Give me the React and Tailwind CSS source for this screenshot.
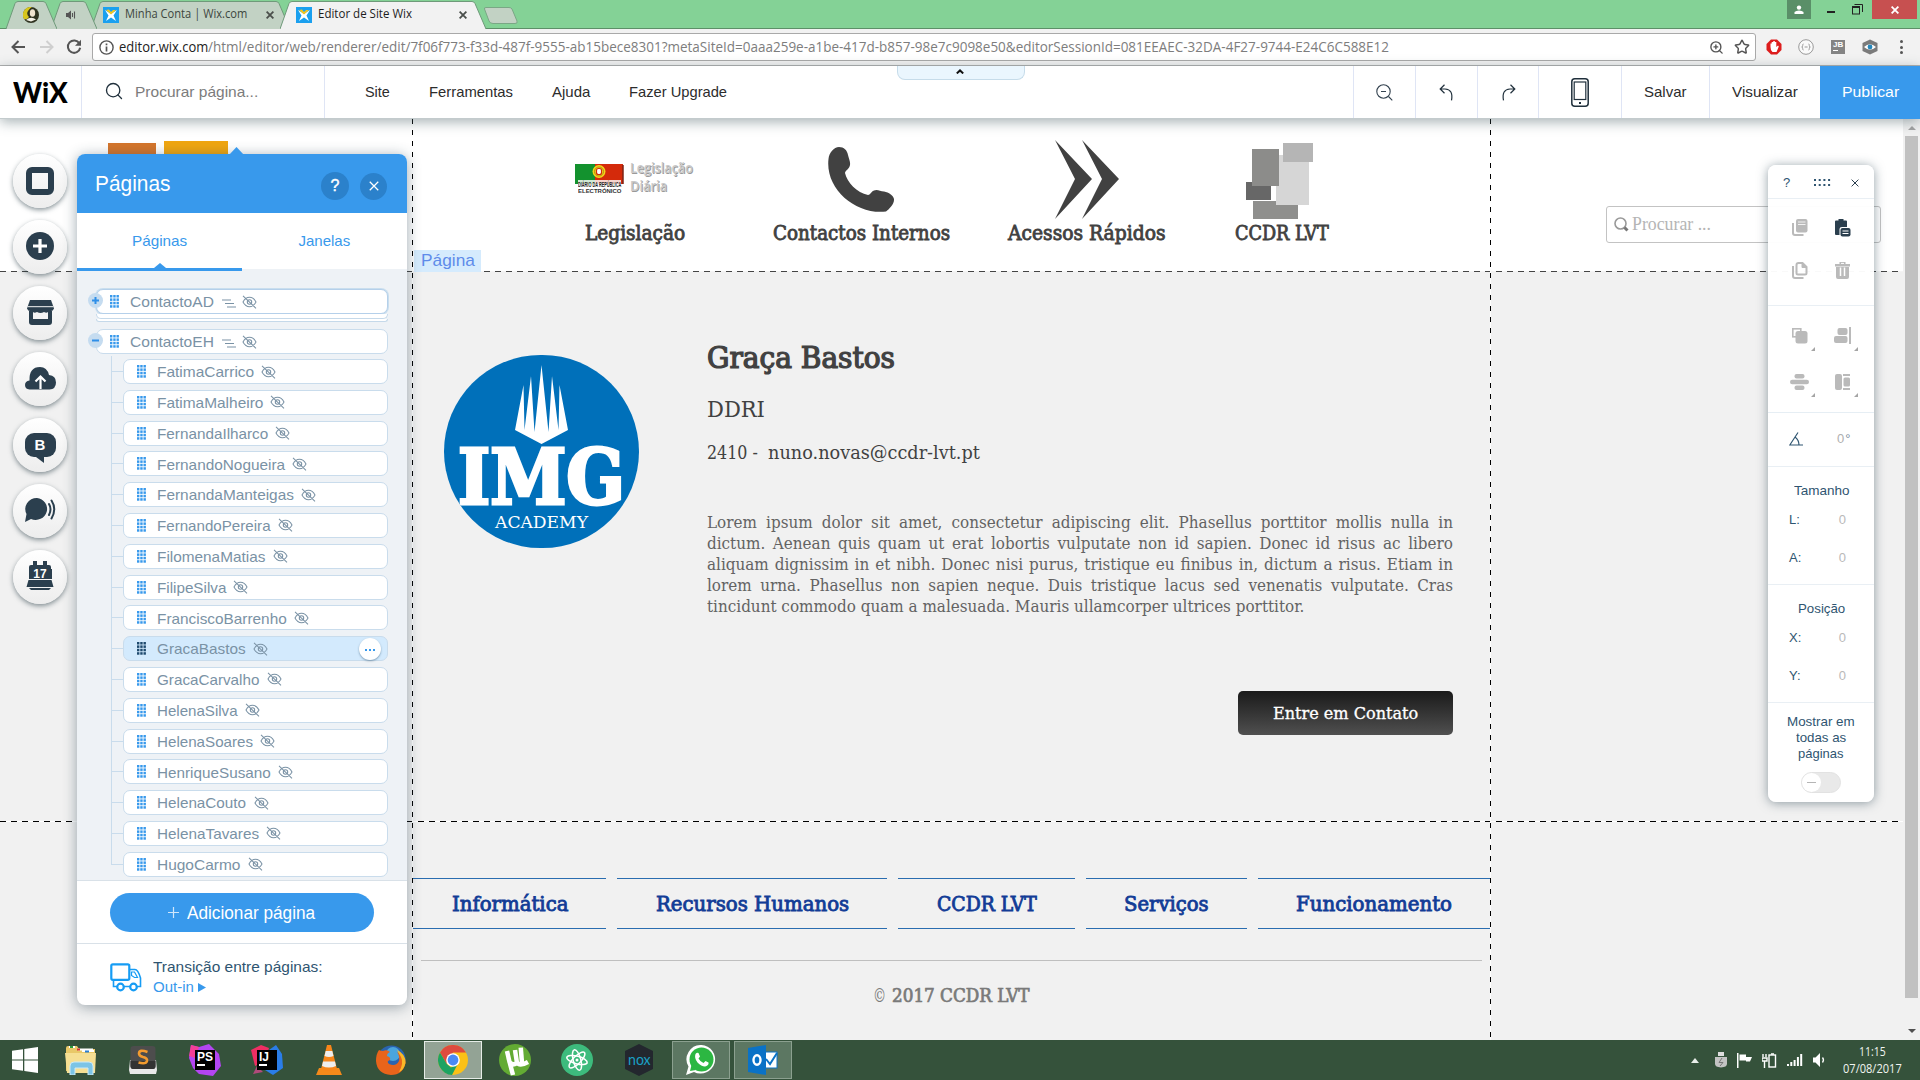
import { useLayoutEffect, useRef, useState } from "react";
import { Star, ZoomIn, Search } from "lucide-react";

/* Single line of text condensed or expanded to a given width. */
function T({ w, className = "", children }) {
  const ref = useRef(null);
  const [s, setS] = useState(1);
  useLayoutEffect(() => {
    setS(w / ref.current.offsetWidth);
  }, [w]);
  return (
    <span className={"block shrink-0 whitespace-pre text-left " + className} style={{ width: w }}>
      <span ref={ref} className="block w-max origin-left" style={{ transform: `scaleX(${s})` }}>
        {children}
      </span>
    </span>
  );
}

const SLAB = "font-['DejaVu_Serif_Condensed','DejaVu_Serif',serif]";
const UI = "font-['Open_Sans','Noto_Sans',sans-serif]";

/* ---------- browser chrome ---------- */

function TabShape({ w, fill, className = "", children }) {
  return (
    <div className={"relative h-[29px] shrink-0 " + className}>
      <svg className="absolute inset-0" width={w} height="29">
        <path
          d={`M0 29 L9 3.5 Q10 1.5 12 1.5 H${w - 14} Q${w - 12} 1.5 ${w - 11} 3.5 L${w} 29`}
          fill={fill}
          stroke="#6f9a7a"
          strokeWidth="1"
        />
      </svg>
      <div className="relative flex h-full items-center">{children}</div>
    </div>
  );
}

function Favicon() {
  return (
    <svg width="16" height="16" viewBox="0 0 16 16" className="shrink-0">
      <rect width="16" height="16" fill="#1ba0ef" />
      <path d="M2 3 L8 7 L14 3 L10.5 8.5 L13 14 L8 10.5 L3 14 L5.5 8.5Z" fill="#fff" />
      <path d="M3 3 L8 7.5 L13 3 L10 3 L8 5 L6 2.5Z" fill="#f7c61c" />
    </svg>
  );
}

function CloseX({ size = 8, color = "#4a4f4b", sw = 1.8 }) {
  return (
    <svg width={size} height={size} viewBox="0 0 8 8" className="shrink-0">
      <path d="M.6 .6 L7.4 7.4 M7.4 .6 L.6 7.4" stroke={color} strokeWidth={sw} />
    </svg>
  );
}

function TabStrip() {
  return (
    <div className={"flex h-[29px] shrink-0 border-b border-[#5d9068] bg-[#84d296] text-[12.5px] " + UI}>
      <TabShape w={51} fill="#c2d2c4" className="z-[3] ml-[6px] w-[51px]">
        <svg className="ml-[17px]" width="16" height="16" viewBox="0 0 16 16">
          <circle cx="8" cy="8" r="8" fill="#2f3320" />
          <path d="M9 0 A8 8 0 0 0 1 12 Q4 13 6 10 Q3 7 5 4 Q7 1 9 0Z" fill="#d8c61e" />
          <ellipse cx="9.5" cy="6" rx="2.7" ry="3.8" fill="#efe4cf" />
          <path d="M3 13 Q8 9 13 12.500 L8 14.500Z" fill="#f3f1e6" />
        </svg>
      </TabShape>
      <TabShape w={46} fill="#c2d2c4" className="z-[2] -ml-[6px] w-[46px]">
        <svg className="ml-[15px]" width="10" height="10" viewBox="0 0 10 10">
          <path d="M0 3 H2 L5 .5 V9.5 L2 7 H0Z" fill="#555" />
          <path d="M6.5 3 V7 M8.5 1.5 V8.5" stroke="#555" strokeWidth="1.1" />
        </svg>
      </TabShape>
      <TabShape w={199} fill="#c2d2c4" className="z-[1] -ml-[6px] w-[199px]">
        <div className="flex items-center pl-[12px]">
          <Favicon />
          <T w={122} className="ml-[6px] text-[#3c463e]">Minha Conta | Wix.com</T>
          <div className="ml-[19px]"><CloseX /></div>
        </div>
      </TabShape>
      <TabShape w={206} fill="#f2f2f2" className="z-[4] -ml-[10px] w-[206px]">
        <div className="flex items-center pl-[16px]">
          <Favicon />
          <T w={94} className="ml-[6px] text-[#1d1d1d]">Editor de Site Wix</T>
          <div className="ml-[47px]"><CloseX /></div>
        </div>
      </TabShape>
      <svg className="-ml-[3px] mt-[6px]" width="38" height="19">
        <path d="M1.5 3 Q1 1.5 3 1.5 H26 Q28 1.5 29 3 L34 15 Q35 17.5 32 17.5 H10 Q7 17.5 6 15Z" fill="#c2d2c4" stroke="#7aa785" />
      </svg>
      <div className="ml-auto flex h-[19px] items-center">
        <div className="flex h-[19px] w-[24px] items-center justify-center bg-[#5a8f68]">
          <svg width="10" height="10" viewBox="0 0 10 10" fill="#fff">
            <circle cx="5" cy="2.6" r="2.2" />
            <path d="M.5 9 V7 Q2 5.5 5 5.5 Q8 5.5 9.5 7 V9Z" />
          </svg>
        </div>
        <div className="ml-[16px] mt-[5px] h-[2px] w-[8px] bg-[#222]" />
        <svg className="ml-[17px]" width="11" height="11" viewBox="0 0 11 11" fill="none" stroke="#222">
          <rect x=".5" y="2.5" width="7" height="7.5" />
          <path d="M.5 3.5 H7.5 M2.5 .5 H10.5 V8" />
        </svg>
        <div className="ml-[9px] mr-[3px] flex h-[19px] w-[45px] items-center justify-center bg-[#c75050]">
          <CloseX color="#fff" />
        </div>
      </div>
    </div>
  );
}

function AddressBar() {
  return (
    <div className="flex h-[37px] shrink-0 items-center border-b border-[#b0b0b0] bg-[#f2f2f2]">
      <svg className="ml-[11px]" width="14" height="14" viewBox="0 0 14 14" fill="none" stroke="#555" strokeWidth="2">
        <path d="M14 7 H1.5 M7.5 1 L1.5 7 L7.5 13" />
      </svg>
      <svg className="ml-[15px]" width="14" height="14" viewBox="0 0 14 14" fill="none" stroke="#cfcfcf" strokeWidth="2">
        <path d="M0 7 H12.5 M6.5 1 L12.5 7 L6.5 13" />
      </svg>
      <svg className="ml-[12px]" width="16" height="16" viewBox="0 0 16 16">
        <path d="M13.4 4.4 A6.2 6.2 0 1 0 14.2 8.8" fill="none" stroke="#555" strokeWidth="2" />
        <path d="M15 .8 V6.8 H9Z" fill="#555" />
      </svg>
      <div className={"ml-[10px] flex h-[28px] w-[1664px] items-center rounded-[3px] border border-[#a9a9a9] bg-white text-[14px] " + UI}>
        <svg className="ml-[6px]" width="15" height="15" viewBox="0 0 15 15" fill="none" stroke="#555" strokeWidth="1.4">
          <circle cx="7.5" cy="7.5" r="6.6" />
          <path d="M7.5 6.5 V11.5 M7.5 3.6 V5.2" strokeWidth="1.7" />
        </svg>
        <T w={89} className="ml-[5px] -mt-[1px] text-[#222]">editor.wix.com</T>
        <T w={1181} className="-mt-[1px] text-[#7d7d7d]">
          /html/editor/web/renderer/edit/7f06f773-f33d-487f-9555-ab15bece8301?metaSiteId=0aaa259e-a1be-417d-b857-98e7c9098e50&amp;editorSessionId=081EEAEC-32DA-4F27-9744-E24C6C588E12
        </T>
        <ZoomIn className="ml-auto" size={15} color="#555" strokeWidth={2.2} />
        <Star className="ml-[10px] mr-[5px]" size={16} color="#555" strokeWidth={2.2} />
      </div>
      <svg className="ml-[10px]" width="16" height="16" viewBox="0 0 16 16">
        <path d="M5 .5 H11 L15.5 5 V11 L11 15.5 H5 L.5 11 V5Z" fill="#dd1d1d" />
        <path d="M4.500 8 V4.500 H5.700 V3 H7.300 V2 H8.800 V3 H10.300 V8 L12 6.500 L12.800 7.500 L10.500 13 H6.500 Q4.500 11.500 4.500 8Z" fill="#fff" />
      </svg>
      <svg className="ml-[16px]" width="16" height="16" viewBox="0 0 16 16" fill="none" stroke="#999">
        <circle cx="8" cy="8" r="7.3" fill="#fafafa" />
        <path d="M5.5 5 Q4.5 5 4.7 6.5 Q4.7 8 3.7 8 Q4.7 8 4.7 9.5 Q4.5 11 5.5 11 M10.5 5 Q11.5 5 11.3 6.5 Q11.3 8 12.3 8 Q11.3 8 11.3 9.5 Q11.5 11 10.5 11 M6.6 8 H9.6" />
      </svg>
      <div className="ml-[17px] flex h-[14px] w-[14px] flex-col bg-[#848484] pl-[2px] text-[8px] font-bold leading-[9px] text-white font-['Liberation_Sans',sans-serif]">
        JB
        <span className="mt-[1px] h-[1px] w-[5px] bg-white" />
      </div>
      <svg className="ml-[17px]" width="16" height="16" viewBox="0 0 16 16">
        <path d="M8 .5 L15.5 4 V12 L8 15.5 L.5 12 V4Z" fill="#7b7b7b" />
        <path d="M2 8 Q8 2.5 14 8 Q8 13.5 2 8Z" fill="#fff" />
        <circle cx="8" cy="8" r="2.4" fill="#2586ba" />
      </svg>
      <div className="ml-[22px] flex flex-col gap-[2.5px]">
        <span className="h-[3px] w-[3px] rounded-full bg-[#555]" />
        <span className="h-[3px] w-[3px] rounded-full bg-[#555]" />
        <span className="h-[3px] w-[3px] rounded-full bg-[#555]" />
      </div>
    </div>
  );
}

/* ---------- editor top bar ---------- */

function TopBar() {
  return (
    <div className="relative z-20 flex h-[53px] shrink-0 items-center border-b border-[#c3cbcd] bg-white text-[15px] text-[#2c2c2c] shadow-[0_3px_12px_rgba(60,85,90,0.45)]">
      <div className="flex h-full w-[82px] items-center border-r border-[#dfe5f5] pl-[13px]">
        <T w={55} className="text-[29px] leading-[30px] font-black text-black font-['Lato',sans-serif]">WiX</T>
      </div>
      <div className="flex h-full w-[243px] items-center border-r border-[#dfe5f5] pl-[22px]">
        <Search size={20} strokeWidth={1.6} color="#20303c" className="-mt-[2px]" />
        <T w={123} className="ml-[11px] pt-[1px] text-[#7c7c7c]">Procurar página...</T>
      </div>
      <T w={25} className="ml-[40px] pt-[1px]">Site</T>
      <T w={84} className="ml-[39px] pt-[1px]">Ferramentas</T>
      <T w={38} className="ml-[39px] pt-[1px]">Ajuda</T>
      <T w={98} className="ml-[39px] pt-[1px]">Fazer Upgrade</T>
      <div className="ml-[170px] flex h-[14px] w-[128px] items-center justify-center self-start rounded-b-[8px] border border-t-0 border-[#c6dcea] bg-[#eaf6fe]">
        <svg width="8" height="5" viewBox="0 0 8 5" fill="none" stroke="#111" strokeWidth="2" className="mb-[3px] mr-[2px]">
          <path d="M.8 4.4 L4 1.4 L7.2 4.4" />
        </svg>
      </div>
      <div className="ml-auto flex h-full w-[63px] items-center justify-center border-x border-[#dfe5f5]">
        <svg width="17" height="17" viewBox="0 0 17 17" fill="none" stroke="#33424f" strokeWidth="1.1">
          <circle cx="7.5" cy="7.5" r="6.7" />
          <path d="M5 7.5 H10 M12.5 12.5 L16.3 16.3" />
        </svg>
      </div>
      <div className="flex h-full w-[62px] items-center justify-center border-r border-[#dfe5f5]">
        <svg width="16" height="17" viewBox="0 0 16 17" fill="none" stroke="#20303c" strokeWidth="1.2">
          <path d="M5.5 .8 L1.2 5 L5.5 9.2 M1.2 5 H6 Q14.5 5.5 12.5 16.3" />
        </svg>
      </div>
      <div className="flex h-full w-[61px] items-center justify-center border-r border-[#dfe5f5]">
        <svg width="16" height="17" viewBox="0 0 16 17" fill="none" stroke="#20303c" strokeWidth="1.2">
          <path d="M10.5 .8 L14.8 5 L10.5 9.2 M14.8 5 H10 Q1.5 5.5 3.5 16.3" />
        </svg>
      </div>
      <div className="flex h-full w-[83px] items-center justify-center border-r border-[#dfe5f5]">
        <svg width="18" height="29" viewBox="0 0 18 29" fill="none" stroke="#20303c" strokeWidth="1.5">
          <rect x=".8" y=".8" width="16.4" height="27.4" rx="3" />
          <rect x="3.2" y="4" width="11.6" height="17.5" strokeWidth="1.2" />
          <path d="M8 25 H10" strokeWidth="2" />
        </svg>
      </div>
      <div className="flex h-full w-[88px] items-center justify-center border-r border-[#dfe5f5]"><T w={43} className="pt-[1px]">Salvar</T></div>
      <div className="flex h-full w-[110px] items-center justify-center"><T w={66} className="pt-[1px]">Visualizar</T></div>
      <div className="flex h-[53px] w-[100px] items-center justify-center bg-[#3899ec] text-white"><T w={57} className="pt-[1px]">Publicar</T></div>
    </div>
  );
}

/* ---------- left rail ---------- */

const INK = "#2b3f4e";

const railIcons = [
  <svg key="bg" width="28" height="28"><rect x="3" y="3" width="22" height="22" rx="3" fill="none" stroke={INK} strokeWidth="6" /></svg>,
  <svg key="add" className="-mt-[2px]" width="28" height="28"><circle cx="14" cy="14" r="14" fill={INK} /><path d="M14 7 V21 M7 14 H21" stroke="#fff" strokeWidth="3.2" /></svg>,
  <svg key="store" className="-mt-[2px]" width="27" height="25" viewBox="0 0 27 25">
    <path d="M3 0 H24 L27 8.5 Q26 11 24 11 H3 Q1 11 0 8.5Z" fill={INK} />
    <path d="M.5 6.7 H26.5" stroke="#f5f5f5" strokeWidth="1" />
    <path d="M2 11 H25 V22 Q25 25 22 25 H5 Q2 25 2 22Z" fill={INK} />
    <path d="M6 12 Q7.5 13.5 10 12 Q13.5 14 17 12 Q19.5 13.5 21 12 V19 H6Z" fill="#f3f3f3" />
  </svg>,
  <svg key="cloud" className="-mt-[2px]" width="31" height="23" viewBox="0 0 31 23">
    <path d="M4.5 22.5 Q0 22 0 18 Q0 14 4.5 13.5 Q4 0 15 0 Q22 0 24 8 Q31 8.5 31 15.5 Q31 22 24.5 22.5Z" fill={INK} />
    <path d="M15.5 22 V10 M10.5 14.5 L15.5 9.5 L20.5 14.5" fill="none" stroke="#fff" strokeWidth="2.2" />
  </svg>,
  <div key="blog" className="flex flex-col items-center pt-[5px]">
    <div className="flex h-[24px] w-[31px] items-center justify-center rounded-[9px] bg-[#2b3f4e] pt-[1px] text-[15px] font-bold text-white">B</div>
    <svg width="10" height="6"><path d="M1 0 H9 V6Z" fill={INK} /></svg>
  </div>,
  <svg key="chat" className="-mt-[3px]" width="33" height="26" viewBox="0 0 33 26">
    <path d="M13 1 A11.5 11 0 1 1 7 22 L1 25 L2.5 17 A11.5 11 0 0 1 13 1Z" fill={INK} />
    <path d="M25 7 Q28 12 25 18 M27.5 3.5 Q33 12 27.5 21.5" fill="none" stroke={INK} strokeWidth="2" strokeLinecap="round" />
  </svg>,
  <div key="cal" className="-mt-[3px] flex flex-col items-center">
    <svg width="28" height="8" viewBox="0 0 28 8"><path d="M3 8 V6 Q3 4 5 4 H23 Q25 4 25 6 V8Z M7 0 h4 v6 h-4z M17 0 h4 v6 h-4z" fill={INK} /></svg>
    <div className="flex h-[10px] w-[23px] items-center justify-center bg-[#2b3f4e] text-[12px] leading-[10px] font-bold text-white">17</div>
    <svg width="28" height="11" viewBox="0 0 28 11"><path d="M2.500 1 H25.500 L27.500 8 H.500Z M3 9 H25 L23 11 H5Z" fill={INK} /></svg>
  </div>,
];

function Rail() {
  return (
    <div className="absolute left-[13px] top-[35px] flex flex-col gap-[12px]">
      {railIcons.map((icon, i) => (
        <div key={i} className="flex h-[54px] w-[54px] items-center justify-center rounded-full bg-linear-to-b from-white to-[#ededed] shadow-[0_2px_5px_rgba(40,60,70,0.55)]">
          {icon}
        </div>
      ))}
    </div>
  );
}

/* ---------- pages panel ---------- */

const pages = [
  ["FatimaCarrico", 97], ["FatimaMalheiro", 106], ["FernandaIlharco", 111], ["FernandoNogueira", 128],
  ["FernandaManteigas", 136.5], ["FernandoPereira", 114], ["FilomenaMatias", 108.5], ["FilipeSilva", 69],
  ["FranciscoBarrenho", 130], ["GracaBastos", 89], ["GracaCarvalho", 102.5], ["HelenaSilva", 80.5],
  ["HelenaSoares", 96], ["HenriqueSusano", 114], ["HelenaCouto", 89.5], ["HelenaTavares", 102], ["HugoCarmo", 83.5],
];

function Grip({ color = "#3899ec" }) {
  return (
    <svg width="9" height="13" viewBox="0 0 9 13" fill={color} className="shrink-0">
      {[0, 3.4, 6.8, 10.2].map((y) => [0, 3.25, 6.5].map((x) => <rect key={x + "-" + y} x={x} y={y} width="2.4" height="2.5" />))}
    </svg>
  );
}

function HiddenEye() {
  return (
    <svg width="15" height="14" viewBox="0 0 15 14" fill="none" stroke="#7a92a5" strokeWidth="1.05" className="shrink-0">
      <path d="M1 7 Q3.5 2.3 7.5 2.3 Q11.5 2.3 14 7 Q11.5 11.7 7.5 11.7 Q3.5 11.7 1 7Z M1 .8 L14 13.3" />
      <circle cx="7.5" cy="7" r="2.2" />
    </svg>
  );
}

function SubBars() {
  return (
    <svg width="14" height="9" viewBox="0 0 14 9" stroke="#7a92a5" strokeWidth="1.2" className="shrink-0">
      <path d="M0 1 H9 M3 4.5 H12 M5 8 H14" />
    </svg>
  );
}

function ParentRow({ name, sign, w, className = "" }) {
  return (
    <div className={"flex h-[25px] items-center rounded-[7px] bg-white " + className}>
      <span className="-ml-[9px] mb-[3px] flex h-[15px] w-[15px] shrink-0 items-center justify-center rounded-full bg-[#c5dcf0]">
        <svg width="7" height="7" stroke="#2f8fe8" strokeWidth="2"><path d={sign === "+" ? "M0 3.5 H7 M3.5 0 V7" : "M0 3.5 H7"} /></svg>
      </span>
      <div className="ml-[7px]"><Grip /></div>
      <T w={w} className="ml-[11px] pt-[2px]">{name}</T>
      <div className="ml-[8px] pt-[4px]"><SubBars /></div>
      <div className="ml-[6px]"><HiddenEye /></div>
    </div>
  );
}

function PagesPanel() {
  return (
    <div className="absolute left-[77px] top-[35px] flex h-[851px] w-[330px] flex-col rounded-[8px] bg-white shadow-[0_2px_14px_rgba(40,65,80,0.45)]">
      <svg className="absolute left-[152px] -top-[7px]" width="15" height="8"><path d="M0 8 L7.5 0 L15 8Z" fill="#3899ec" /></svg>
      <div className="flex h-[59px] shrink-0 items-center rounded-t-[8px] bg-[#3899ec] pl-[18px] text-white">
        <T w={76} className="text-[22px]">Páginas</T>
        <div className="ml-[150px] mt-[5px] flex h-[28px] w-[28px] items-center justify-center rounded-full bg-[#2b81cb] text-[16px]">
          <span className="[-webkit-text-stroke:0.4px_white]">?</span>
        </div>
        <div className="ml-[11px] mt-[5px] flex h-[27px] w-[27px] items-center justify-center rounded-full bg-[#2b81cb]">
          <CloseX size={10} color="#fff" sw={1} />
        </div>
      </div>
      <div className="flex h-[58px] shrink-0 bg-[#eef2f6] text-[15px] text-[#3899ec]">
        <div className="flex w-[165px] flex-col items-center border-b-[3px] border-[#3899ec] bg-white">
          <T w={55} className="mt-[16px] leading-[24px]">Páginas</T>
          <svg className="mt-auto" width="12" height="5"><path d="M0 5 L6 0 L12 5Z" fill="#3899ec" /></svg>
        </div>
        <div className="flex h-[56px] w-[165px] justify-center bg-white">
          <T w={52} className="mt-[16px] leading-[24px]">Janelas</T>
        </div>
      </div>
      <div className="h-[609px] shrink-0 overflow-hidden bg-[#eef2f6] pr-[19px] pt-[18px] text-[15px] text-[#7a92a5]">
        <div className="ml-[19px]">
          <ParentRow name="ContactoAD" sign="+" w={84} className="border border-[#b5d0ea] ring-1 ring-[#c9deee]" />
          <div className="h-[5px] rounded-b-[6px] border border-t-0 border-[#c5d9ea] bg-white" />
          <div className="h-[3px] rounded-b-[6px] border border-t-0 border-[#c5d9ea] bg-white" />
          <ParentRow name="ContactoEH" sign="-" w={84} className="mt-[7px] border border-[#c9dcec]" />
        </div>
        <div className="relative ml-[34px] mt-[5px] flex flex-col gap-[5.8px]">
          <div className="absolute left-0 -top-[3px] bottom-[12px] w-px bg-[#c9dcec]" />
          {pages.map(([name, w]) => {
            const on = name === "GracaBastos";
            return (
              <div key={name} className="flex h-[25px] shrink-0 items-center">
                <div className="h-px w-[12px] bg-[#c9dcec]" />
                <div className={"flex h-[25px] w-[265px] items-center rounded-[7px] border border-[#c9dcec] pl-[13px] " + (on ? "bg-[#d3eafd]" : "bg-white")}>
                  <Grip color={on ? "#1f4a6e" : "#3899ec"} />
                  <T w={w} className="ml-[11px] pt-[2px]">{name}</T>
                  <div className="ml-[7px]"><HiddenEye /></div>
                  {on && (
                    <div className="ml-auto mr-[6px] flex h-[22px] w-[22px] items-center justify-center gap-[2px] rounded-full bg-white pt-[2px] shadow-[0_1px_2px_rgba(40,80,110,0.5)]">
                      <i className="h-[2px] w-[2px] bg-[#3899ec]" />
                      <i className="h-[2px] w-[2px] bg-[#3899ec]" />
                      <i className="h-[2px] w-[2px] bg-[#3899ec]" />
                    </div>
                  )}
                </div>
              </div>
            );
          })}
        </div>
      </div>
      <div className="flex h-[64px] shrink-0 justify-center border-y border-[#d9e1e8] pt-[12px]">
        <div className="flex h-[39px] w-[264px] items-center rounded-full bg-[#3899ec] pl-[58px] text-white">
          <svg width="11" height="11" stroke="#cfe6fb" strokeWidth="1.2"><path d="M0 5.5 H11 M5.5 0 V11" /></svg>
          <T w={128} className="ml-[8px] pt-[1px] text-[18px]">Adicionar página</T>
        </div>
      </div>
      <div className="flex pl-[33px] pt-[13px]">
        <svg className="mt-[6px]" width="32" height="29" viewBox="0 0 32 29" fill="none" stroke="#169cf4" strokeWidth="2.2">
          <rect x="1.3" y="1.3" width="18" height="15.5" rx="1.5" />
          <path d="M20 6.5 H25 Q28 6.5 30.5 15 V23.5 H3.5 V17" strokeWidth="1.6" />
          <path d="M21.5 9 H24.5 L27.5 14.5 H24.5 L21.5 12.5Z" strokeWidth="1.2" />
          <circle cx="10.5" cy="24" r="3.3" fill="#fff" />
          <circle cx="23.5" cy="24" r="3.3" fill="#fff" />
        </svg>
        <div className="ml-[11px] text-[15px] leading-[20px]">
          <T w={170} className="text-[#2f5571]">Transição entre páginas:</T>
          <div className="flex items-center text-[#3899ec]">
            <T w={41}>Out-in</T>
            <svg className="ml-[4px]" width="8" height="9"><path d="M0 0 L8 4.5 L0 9Z" fill="#3899ec" /></svg>
          </div>
        </div>
      </div>
    </div>
  );
}

/* ---------- site being edited ---------- */

function NavItem({ w, label, top, className, children }) {
  return (
    <div className={"flex flex-col items-center " + className}>
      <div className={"flex h-[102px] items-start " + top}>{children}</div>
      <T w={w} className={"text-[20px] leading-[24px] text-[#414141] [-webkit-text-stroke:0.8px_#414141] " + SLAB}>{label}</T>
    </div>
  );
}

function SiteHeader() {
  return (
    <div className="flex h-[153px] shrink-0 bg-white">
      <NavItem w={100} label="Legislação" className="ml-[575px] w-[119px]" top="pt-[44px]">
        <div className="-ml-[2px] mt-[1px] flex w-[49px] flex-col items-center">
          <svg width="49" height="20" viewBox="0 0 49 20">
            <rect width="20" height="20" fill="#13922e" />
            <rect x="20" width="28" height="20" fill="#d42a0b" />
            <path d="M48 1 V20" stroke="#7d2316" strokeWidth="1.5" />
            <circle cx="24" cy="7.5" r="6.5" fill="#f2d51a" />
            <circle cx="24" cy="7.5" r="4.5" fill="none" stroke="#b58d10" />
            <rect x="21.5" y="4.5" width="5" height="6" rx="2" fill="#fff" stroke="#d42a0b" strokeWidth="1.2" />
          </svg>
          <T w={43} className="-mt-[4px] bg-white/80 text-[8px] leading-[9px] font-bold text-[#222]">DIÁRIO DA REPÚBLICA</T>
          <T w={43} className="text-[5px] leading-[5px] font-bold text-[#333]">ELECTRÓNICO</T>
        </div>
        <div className="ml-[6px] -mt-[4px] text-[15px] leading-[17.5px] font-semibold text-[#c9c9c9] [text-shadow:1px_1px_0_#9a9a9a] font-['Open_Sans',sans-serif]">
          <T w={63}>Legislação</T>
          <T w={37}>Diária</T>
        </div>
      </NavItem>
      <NavItem w={177} label="Contactos Internos" className="ml-[79px] w-[177px]" top="pt-[28px]">
        <svg width="67" height="66" viewBox="0 0 67 66">
          <path d="M.5 12 C1 6 6 0 11 0 C16 0 19 3 20 8 C21 12 22.5 15 22 18 C21.5 22 17.5 23 17 26 C19 35 29 46 40 48 C43 47.5 43 44.5 46 43.5 C49 42 52 44 56 44.5 C61 45.5 65 48 66 52 C66.5 57 61 62 58 64.5 C28 68 -3 42 .5 12Z" fill="#414141" />
        </svg>
      </NavItem>
      <NavItem w={158} label="Acessos Rápidos" className="ml-[58px] w-[157px]" top="pt-[21px]">
        <svg width="65" height="79" viewBox="0 0 65 79" fill="#414141" className="ml-[2px]">
          <path d="M0 0 L37 39 L0 79 L20 39Z M27 0 L64 39 L27 79 L47 39Z" />
        </svg>
      </NavItem>
      <NavItem w={94} label="CCDR LVT" className="ml-[70px] w-[93px]" top="pt-[24px]">
        <svg width="67" height="76" viewBox="0 0 67 76" className="mr-[4px]">
          <rect x="7" y="58" width="45" height="18" fill="#8f8f8d" />
          <rect x="30" y="12" width="33" height="50" fill="#d6d6d6" />
          <rect x="0" y="39" width="25" height="18" fill="#676767" />
          <rect x="6" y="6" width="27" height="37" fill="#8c8c8a" />
          <rect x="37" y="0" width="30" height="19" fill="#b5b5b5" />
        </svg>
      </NavItem>
      <div className="ml-[278px] mt-[87px] flex h-[37px] w-[275px] items-center rounded-[3px] border border-[#c3c3c3] pl-[7px]">
        <svg width="15" height="15" viewBox="0 0 15 15" fill="none">
          <circle cx="6.5" cy="6.5" r="5.5" stroke="#999" strokeWidth="1.6" />
          <path d="M10.5 10.5 L13.5 13.5" stroke="#777" strokeWidth="3" />
        </svg>
        <T w={79} className="ml-[3px] text-[18px] text-[#b5b5b5] font-['Liberation_Serif',serif]">Procurar ...</T>
      </div>
    </div>
  );
}

const lorem = [
  "Lorem ipsum dolor sit amet, consectetur adipiscing elit. Phasellus porttitor mollis nulla in",
  "dictum. Aenean quis quam ut erat lobortis vulputate non id sapien. Donec id risus ac libero",
  "aliquam dignissim in et nibh. Donec nisi purus, tristique eu finibus in, dictum a risus. Etiam in",
  "lorem urna. Phasellus non sapien neque. Duis tristique lacus sed venenatis vulputate. Cras",
];

/* Justified paragraph; the last line sets the horizontal scale of all of them. */
function Lorem() {
  const ref = useRef(null);
  const [s, setS] = useState(1);
  useLayoutEffect(() => {
    setS(597 / ref.current.offsetWidth);
  }, []);
  return (
    <div className={"mt-[48px] h-[105px] w-[746px] text-[16.5px] leading-[21px] text-[#636363] " + SLAB}>
      <div className="origin-top-left" style={{ width: 746 / s, transform: `scaleX(${s})` }}>
        {lorem.map((l) => (
          <div key={l} className="h-[21px] text-justify [text-align-last:justify]">{l}</div>
        ))}
        <span ref={ref} className="block w-max">tincidunt commodo quam a malesuada. Mauris ullamcorper ultrices porttitor.</span>
      </div>
    </div>
  );
}

function AcademyLogo() {
  return (
    <div className="mt-[83px] flex h-[193px] w-[195px] flex-col items-center overflow-hidden rounded-full bg-[#0070ba] text-white">
      <svg className="mt-[10px] shrink-0" width="53" height="79" viewBox="0 0 53 79" fill="#fff">
        <path d="M0 65 L8.5 20 L9.5 65 L16 11 L19.5 67 L26.5 0 L33.5 67 L37 11 L43.5 65 L44.5 20 L53 65 L26.5 79Z" />
      </svg>
      <T w={167} className={"mt-[4px] text-[76px] leading-[60px] font-bold [-webkit-text-stroke:3px_white] " + SLAB}>IMG</T>
      <T w={93} className={"mt-[3px] text-[17px] leading-[22px] " + SLAB}>ACADEMY</T>
    </div>
  );
}

function SiteBody() {
  return (
    <div className="flex h-[549px] shrink-0 pl-[444px]">
      <AcademyLogo />
      <div className={"ml-[68px] flex w-[746px] flex-col pt-[68px] text-[#414141] " + SLAB}>
        <T w={188} className="text-[29px] leading-[36px] [-webkit-text-stroke:1.2px_#414141]">Graça Bastos</T>
        <T w={58} className="mt-[19px] text-[23px] leading-[28px]">DDRI</T>
        <div className="mt-[19px] flex text-[18px] leading-[22px]">
          <T w={51}>2410 -</T>
          <T w={212} className="ml-[10px]">nuno.novas@ccdr-lvt.pt</T>
        </div>
        <Lorem />
        <div className="mt-[74px] flex h-[44px] w-[215px] items-center justify-center self-end rounded-[5px] bg-linear-to-b from-[#1b1b1b] to-[#505050] text-white">
          <T w={145} className="pb-[1px] text-[17.5px] leading-[22px] [-webkit-text-stroke:0.3px_white]">Entre em Contato</T>
        </div>
      </div>
    </div>
  );
}

function FooterLink({ w, className, children }) {
  return (
    <div className={"flex h-[51px] items-center justify-center border-y border-[#2a6db0] " + className}>
      <T w={w} className="text-[20px] leading-[24px] [-webkit-text-stroke:0.8px_#123c96]">{children}</T>
    </div>
  );
}

function SiteFooter() {
  return (
    <div className={"flex flex-1 flex-col pl-[413px] pt-[57px] " + SLAB}>
      <div className="flex gap-[11px] text-[#123c96]">
        <FooterLink w={116} className="w-[193px]">Informática</FooterLink>
        <FooterLink w={193} className="w-[270px]">Recursos Humanos</FooterLink>
        <FooterLink w={100} className="w-[177px]">CCDR LVT</FooterLink>
        <FooterLink w={85} className="w-[161px]">Serviços</FooterLink>
        <FooterLink w={156} className="w-[232px]">Funcionamento</FooterLink>
      </div>
      <div className="ml-[8px] mt-[31px] h-px w-[1061px] bg-[#bfbfbf]" />
      <div className="mt-[23px] flex w-[1077px] justify-center text-[18px] leading-[24px] text-[#7a7a7a]">
        <T w={13}>©</T>
        <T w={138} className="ml-[6px] [-webkit-text-stroke:0.7px_#7a7a7a]">2017 CCDR LVT</T>
      </div>
    </div>
  );
}

/* ---------- floating toolbox ---------- */

function Corner() {
  return <svg className="absolute -bottom-[6px] -right-[6px]" width="4" height="4"><path d="M4 0 V4 H0Z" fill="#a5a5a5" /></svg>;
}

function ToolIcon({ corner, children }) {
  return (
    <div className="relative flex h-[19px] w-[19px] items-center justify-center">
      {children}
      {corner && <Corner />}
    </div>
  );
}

function Pair({ label, w, className = "" }) {
  return (
    <div className={"flex h-[18px] items-center justify-between pl-[21px] pr-[28px] " + className}>
      <T w={w} className="text-[#2f5571]">{label}</T>
      <span className="text-[#b9b9b9]">0</span>
    </div>
  );
}

const G = "#bababa";

function Toolbox() {
  return (
    <div className="absolute left-[1768px] top-[46px] flex h-[637px] w-[106px] flex-col rounded-[8px] bg-white/[0.97] text-[13px] text-[#2f5571] shadow-[0_1px_11px_rgba(40,65,80,0.5)]">
      <div className="flex h-[34px] items-center border-b border-[#e9eff4] pl-[15px]">
        <span className="pt-[3px]">?</span>
        <svg className="ml-[24px] mt-[2px]" width="17" height="8" fill="#2f5571">
          {[0, 4.7, 9.4, 14.1].map((x) => [0, 5].map((y) => <rect key={x + "-" + y} x={x} y={y} width="2" height="2" />))}
        </svg>
        <div className="ml-[20px] mt-[2px]"><CloseX size={8} color="#2b3f4e" sw={1} /></div>
      </div>
      <div className="grid h-[107px] grid-cols-2 content-start justify-items-center gap-y-[24px] border-b border-[#e9eff4] px-[10px] pt-[19px]">
        <ToolIcon>
          <svg width="16" height="17" viewBox="0 0 16 17">
            <rect x="4" y="0" width="11.5" height="13.5" rx="2" fill={G} />
            <path d="M6 3 H13.5 M6 5.5 H13.5" stroke="#fff" strokeWidth=".8" />
            <path d="M1 4 V14 Q1 16 3 16 H11.5" fill="none" stroke={G} strokeWidth="2" />
          </svg>
        </ToolIcon>
        <ToolIcon>
          <svg width="16" height="18" viewBox="0 0 16 18" fill={INK}>
            <path d="M1 1.5 H3.5 V0 H8.5 V1.5 H11 Q12 1.5 12 2.5 V8 H7 Q4.5 8 4.5 10 V16 H1 Q0 16 0 15 V2.5 Q0 1.5 1 1.5Z" />
            <rect x="5.5" y="9" width="10" height="8.5" rx="2" />
            <path d="M7.5 12 H13.5 M7.5 14.5 H13.5" stroke="#fff" strokeWidth="1.1" />
          </svg>
        </ToolIcon>
        <ToolIcon>
          <svg width="16" height="17" viewBox="0 0 16 17" fill="none" stroke={G} strokeWidth="2">
            <path d="M6.5 1 H10.5 L14.5 5 V11 Q14.5 12.5 13 12.5 H6 Q4.5 12.5 4.5 11 V3 Q4.5 1 6.5 1Z M1 4 V14 Q1 16 3 16 H11.5" />
            <path d="M10 1 V5.5 H14.5Z" fill={G} strokeWidth="1" />
          </svg>
        </ToolIcon>
        <ToolIcon>
          <svg width="15" height="17" viewBox="0 0 15 17">
            <path d="M0 2 H4.5 V0 H10.5 V2 H15 V4.5 H0Z M1 5 H14 V15 Q14 17 12 17 H3 Q1 17 1 15Z" fill={G} />
            <path d="M5.5 5.5 V14 M9.5 5.5 V14" stroke="#fff" strokeWidth="1.5" />
            <path d="M6 1.4 H9" stroke="#fff" />
          </svg>
        </ToolIcon>
      </div>
      <div className="grid h-[107px] grid-cols-2 content-start justify-items-center gap-y-[27px] border-b border-[#e6eef4] px-[10px] pt-[20px]">
        <ToolIcon corner>
          <svg width="16" height="16" viewBox="0 0 16 16">
            <rect x=".8" y=".8" width="8" height="8" fill="none" stroke={G} strokeWidth="1.6" />
            <rect x="3.5" y="3" width="12" height="12.5" rx="2.5" fill={G} />
          </svg>
        </ToolIcon>
        <ToolIcon corner>
          <svg width="18" height="17" viewBox="0 0 18 17" fill={G}>
            <rect x="3.5" y="1" width="10" height="7" rx="2" /><rect x="0" y="9" width="13.5" height="7" rx="2" /><rect x="15" y="0" width="2" height="17" />
          </svg>
        </ToolIcon>
        <ToolIcon corner>
          <svg width="19" height="16" viewBox="0 0 19 16" fill={G}>
            <rect x="4.5" y="0" width="10" height="4.5" rx="2" /><rect x="0" y="5.8" width="19" height="4.4" rx="2.2" /><rect x="4.5" y="11.5" width="10" height="4.5" rx="2" />
          </svg>
        </ToolIcon>
        <ToolIcon corner>
          <svg width="15" height="16" viewBox="0 0 15 16" fill={G}>
            <rect width="7" height="16" rx="2" /><rect x="8.5" y="3.5" width="6.5" height="9" rx="1.5" /><path d="M8 0 H15 V2 H8Z M8 14 H15 V16 H8Z" />
          </svg>
        </ToolIcon>
      </div>
      <div className="flex h-[54px] items-center border-b border-[#e9eff4] pb-[2px] pl-[21px]">
        <svg width="14" height="14" viewBox="0 0 14 14" fill="none" stroke="#2f5571" strokeWidth="1.2">
          <path d="M9 .5 L.8 13 H14 M6 5 Q10 8 10 13" />
        </svg>
        <span className="ml-[34px] flex text-[#b0b0b0]">0<span className="ml-[1px] text-[#7b8e9c]">°</span></span>
      </div>
      <div className="flex h-[118px] flex-col border-b border-[#e9eff4] pt-[14px]">
        <T w={55} className="self-center leading-[20px]">Tamanho</T>
        <Pair label="L:" w={11} className="mt-[10px]" />
        <Pair label="A:" w={12} className="mt-[20px]" />
      </div>
      <div className="flex h-[118px] flex-col border-b border-[#e9eff4] pt-[14px]">
        <T w={47} className="self-center leading-[20px]">Posição</T>
        <Pair label="X:" w={12} className="mt-[10px]" />
        <Pair label="Y:" w={12} className="mt-[20px]" />
      </div>
      <div className="flex flex-col items-center pt-[11px] leading-[16px]">
        <T w={68}>Mostrar em</T>
        <T w={50}>todas as</T>
        <T w={46}>páginas</T>
        <div className="mt-[10px] flex h-[21px] w-[40px] items-center rounded-full border border-[#e2e2e2] bg-[#e9e9e9]">
          <div className="flex h-[19px] w-[19px] items-center justify-center rounded-full bg-white"><i className="h-px w-[9px] bg-[#b5b5b5]" /></div>
        </div>
      </div>
    </div>
  );
}

function Canvas() {
  return (
    <div className="relative flex h-[921px] shrink-0 bg-[#f1f1f1]">
      <div className="flex w-[1903px] flex-col">
        <SiteHeader />
        <SiteBody />
        <SiteFooter />
      </div>
      <div className="flex w-[17px] flex-col items-center bg-[#f1f1f1]">
        <svg className="mt-[7px]" width="8" height="4"><path d="M0 4 L4 0 L8 4Z" fill="#a3a3a3" /></svg>
        <div className="mt-[6px] h-[862px] w-[13px] bg-[#c1c1c1]" />
        <svg className="mt-auto mb-[7px]" width="8" height="4"><path d="M0 0 L4 4 L8 0Z" fill="#505050" /></svg>
      </div>
      <div className="absolute left-0 top-[152px] h-px w-[1903px] bg-[repeating-linear-gradient(90deg,#444_0_6px,#f4f4f4_6px_11px)]" />
      <div className="absolute left-0 top-[702px] h-px w-[1903px] bg-[repeating-linear-gradient(90deg,#000_0_6px,#fff_6px_11px)]" />
      <div className="absolute left-[412px] top-0 h-[921px] w-px bg-[repeating-linear-gradient(180deg,#000_0_5px,#fff_5px_11px)]" />
      <div className="absolute left-[1490px] top-0 h-[921px] w-px bg-[repeating-linear-gradient(180deg,#000_0_5px,#fff_5px_11px)]" />
      <div className="absolute left-[414px] top-[131px] flex h-[22px] w-[67px] items-center bg-[#d5ebfd] pl-[7px] text-[17px] text-[#5e8bea]">
        <T w={54}>Página</T>
      </div>
      <div className="absolute left-[108px] top-[22px] flex items-end gap-[8px]">
        <div className="h-[20px] w-[48px] bg-[#d4752c]" />
        <div className="h-[22px] w-[64px] bg-[#f0a611]" />
      </div>
      <Rail />
      <PagesPanel />
      <Toolbox />
    </div>
  );
}

/* ---------- taskbar ---------- */

function JetIcon({ label, children }) {
  return (
    <div className="relative h-[32px] w-[32px]">
      <svg className="absolute inset-0" width="32" height="32" viewBox="0 0 32 32">{children}</svg>
      <div className="relative ml-[6px] mt-[6px] h-[20px] w-[20px] bg-black pl-[2px] pt-[1px] text-[12px] leading-[13px] font-bold text-white">
        {label}
        <span className="block h-[1.5px] w-[8px] bg-white" />
      </div>
    </div>
  );
}

function Slot({ active, className = "", children }) {
  return <div className={"flex h-[38px] w-[58px] shrink-0 items-center justify-center " + (active ? "border " : "") + className}>{children}</div>;
}

function Taskbar() {
  return (
    <div className="flex h-[40px] shrink-0 items-center bg-[#35523b]">
      <div className="ml-[12px] w-[26px]">
        <svg width="26" height="26" viewBox="0 0 26 26" fill="#fff"><path d="M0 3.8 L11 2.2 V12.4 H0Z M12.3 2 L26 0 V12.4 H12.3Z M0 13.6 H11 V23.8 L0 22.2Z M12.3 13.6 H26 V26 L12.3 24Z" /></svg>
      </div>
      <Slot className="ml-[14px]">
        <svg width="32" height="30" viewBox="0 0 32 30">
          <path d="M1 3 Q1 1 3 1 H12 L14 4 H30 V26 H1Z" fill="#e9c868" />
          <path d="M4 2 H10 M13 4.5 H28 M17 6 H29" stroke="#fff" strokeWidth="2" />
          <path d="M5 1 h3 v2 h-3z" fill="#2c9b3c" /><path d="M12 3.5 h3 v2 h-3z" fill="#d33" /><path d="M20 5.5 h4 v2 h-4z" fill="#2b7fd0" />
          <path d="M0 8 H31 L30 28 H2Z" fill="#f6df93" />
          <path d="M5 30 V21 Q5 17 9 17 H24 Q28 17 28 21 V30 H23 V23 H10 V30Z" fill="#7cc4e6" stroke="#cdeaf6" />
        </svg>
      </Slot>
      <Slot className="ml-[4px]">
        <svg width="30" height="28" viewBox="0 0 30 28"><path d="M1 24 L2 14 H28 L29 24 L28 28 H2Z" fill="#e8e8e8" /><rect x="2.5" y="0" width="25" height="23" rx="3" fill="#4d4d4d" /><path d="M2.5 15 H27.5 V20 Q27.5 23 25 23 H5 Q2.5 23 2.5 20Z" fill="#333" /><path d="M19.5 6 Q11 3 11 7.5 Q11 10 15 11 Q19.5 12 19 15 Q18 18.500 10.5 16.5" fill="none" stroke="#f39b2f" strokeWidth="2.6" /></svg>
      </Slot>
      <Slot className="ml-[4px]">
        <JetIcon label="PS"><path d="M2 1 L10 3 L20 0 L30 10 L32 22 L24 32 L10 30 L4 24 L0 14Z" fill="#b345f1" /><path d="M2 1 L10 3 L6 14 L0 12Z" fill="#f43f97" /></JetIcon>
      </Slot>
      <Slot className="ml-[4px]">
        <JetIcon label="IJ"><path d="M0 6 L10 1 L18 4 L14 18 L4 22Z" fill="#ef2e63" /><path d="M18 6 L25 1 L31 10 L32 24 L22 31 L14 26Z" fill="#2a7de8" /><path d="M6 22 L2 30 L12 28Z" fill="#b04a7b" /></JetIcon>
      </Slot>
      <Slot className="ml-[4px]">
        <svg width="26" height="30" viewBox="0 0 26 30"><path d="M3 23 H23 L26 30 H0Z" fill="#f58a1a" /><path d="M11 0 H15 L21 24 Q13 28 5 24Z" fill="#f7861a" /><path d="M9.7 6 H16.3 L17.5 11 Q13 13 8.5 11Z M7 16.5 H19 L20 21 Q13 24 6 21Z" fill="#eee" /></svg>
      </Slot>
      <Slot className="ml-[4px]">
        <svg width="30" height="30" viewBox="0 0 30 30"><circle cx="15.5" cy="14.5" r="14" fill="#2a64b0" /><circle cx="17" cy="9" r="7" fill="#4aa5dd" /><path d="M3 5 Q5 6 7 6 Q11 4 14 7 Q11 8 11 11 Q15 12 14 15 Q10 16 13 19 Q20 22 23 16 Q24 11 21 7 Q30 11 29.5 18 Q27 30 15 30 Q1 29 0 16 Q0 9 3 5Z" fill="#e8641b" /><path d="M21 5 Q30 9 29.5 18 Q28 25 23 27 Q28 18 25 12Z" fill="#f9b928" /></svg>
      </Slot>
      <Slot active className="ml-[4px] border-[#e6ece7] bg-[#93a395]">
        <svg width="30" height="30" viewBox="0 0 30 30"><circle cx="15" cy="15" r="15" fill="#fbc116" /><path d="M2 7.5 A15 15 0 0 1 28 7.5 H15 L8.6 18.7Z" fill="#dd4b3e" /><path d="M2 7.5 L8.6 18.7 L13 22.5 L20 18.500 L14 30 A15 15 0 0 1 2 7.5Z" fill="#1da362" /><circle cx="15" cy="15" r="6.8" fill="#fff" /><circle cx="15" cy="15" r="5.4" fill="#4a8af4" /></svg>
      </Slot>
      <Slot className="ml-[4px]">
        <svg width="32" height="32" viewBox="0 0 32 32"><circle cx="16" cy="16" r="16" fill="#63ab33" /><path d="M8 7 L10.500 18 Q13 22 18 19 L16 6 M18 18 Q20 23 29 18 M9.500 14 L14 31" fill="none" stroke="#fff" strokeWidth="4.500" /><path d="M24 3 L27 19" stroke="#fff" strokeWidth="4.500" transform="rotate(6 25 11) translate(-3 1)" /></svg>
      </Slot>
      <Slot className="ml-[4px]">
        <svg width="32" height="32" viewBox="0 0 32 32"><circle cx="16" cy="16" r="16" fill="#3dbb7d" /><g fill="none" stroke="#fff" strokeWidth="1.5"><ellipse cx="16" cy="16" rx="3.8" ry="10.5" transform="rotate(-15 16 16)" /><ellipse cx="16" cy="16" rx="3.8" ry="10.5" transform="rotate(45 16 16)" /><ellipse cx="16" cy="16" rx="3.8" ry="10.5" transform="rotate(105 16 16)" /></g><circle cx="16" cy="16" r="1.5" fill="#fff" /></svg>
      </Slot>
      <Slot className="ml-[4px]">
        <div className="flex h-[32px] w-[28px] items-center justify-center bg-[#23272e] [clip-path:polygon(50%_0,100%_22%,100%_78%,50%_100%,0_78%,0_22%)]">
          <T w={23} className="pb-[3px] text-[16px] leading-[18px] text-[#1a9fc4] font-['Lato',sans-serif]">nox</T>
        </div>
      </Slot>
      <Slot active className="ml-[4px] border-[#8ba08f] bg-[#5c7762]">
        <svg width="30" height="30" viewBox="0 0 30 30"><path d="M15.5 0 A14.5 14.3 0 1 1 8 27 L0 30 L2.5 21.5 A14.5 14.3 0 0 1 15.5 0Z" fill="#fff" /><circle cx="15.5" cy="14.5" r="12" fill="#2cb742" /><path d="M4 26 L5.5 20 L10 25Z" fill="#2cb742" /><path d="M9.5 9 Q11 7 12.5 8 L14 11.5 L12.5 13.5 Q14 16.5 17.5 18 L19.5 16 L22.5 17.5 Q23 20 20 21.3 Q16 22 11.5 17.5 Q8 13 9.5 9Z" fill="#fff" /></svg>
      </Slot>
      <Slot active className="ml-[4px] border-[#8ba08f] bg-[#5c7762]">
        <svg width="30" height="30" viewBox="0 0 30 30"><rect x="15" y="7" width="14" height="16" fill="#fff" stroke="#0a72c6" /><path d="M18 14 L22 19 L29 8" fill="none" stroke="#0a72c6" strokeWidth="2" /><path d="M0 3 L18 0 V30 L0 27Z" fill="#0a72c6" /><ellipse cx="9" cy="15" rx="3.5" ry="4.8" fill="none" stroke="#fff" strokeWidth="2.4" /></svg>
      </Slot>
      <div className="ml-auto flex items-center">
        <svg width="8" height="5"><path d="M0 5 L4 0 L8 5Z" fill="#e9eeea" /></svg>
        <svg className="ml-[16px]" width="12" height="16" viewBox="0 0 12 16"><path d="M3 0 H9 V4 H3Z" fill="#ddd" /><path d="M0 5 H12 V12 Q12 15 6 15.5 Q0 15 0 12Z" fill="#c3c3c3" /><path d="M7 6 L4 10.5 H8 L5 14" fill="none" stroke="#777" /></svg>
        <svg className="ml-[10px]" width="16" height="15" viewBox="0 0 16 15" fill="#fff"><path d="M0 0 H1.5 V15 H0Z M2.5 1.5 H9 V4 H15 L13 8.5 H9 V7.5 H2.5Z" /></svg>
        <svg className="ml-[9px]" width="15" height="15" viewBox="0 0 15 15" fill="none" stroke="#fff" strokeWidth="1.4"><rect x="7" y="2" width="6.5" height="12" /><path d="M9 1 H12 M1 1 V4 M4 1 V4 M0 5 H5 V8 H0Z M2.5 8 V15" /></svg>
        <svg className="ml-[10px]" width="16" height="12" viewBox="0 0 16 12" fill="#fff"><path d="M0 10 h2 v2 h-2z M3.3 8 h2 v4 h-2z M6.6 6 h2 v6 h-2z M9.9 3 h2 v9 h-2z M13.2 0 h2 v12 h-2z" /></svg>
        <svg className="ml-[10px]" width="13" height="14" viewBox="0 0 13 14"><path d="M0 4.5 H2.5 L7 0 V14 L2.5 9.5 H0Z" fill="#fff" /><path d="M9.5 4.5 Q11.5 7 9.5 9.5" fill="none" stroke="#fff" strokeWidth="1.3" /></svg>
      </div>
      <div className={"ml-[16px] mr-[18px] flex w-[60px] flex-col items-center text-[12px] leading-[17px] text-[#f1f5f1] " + UI}>
        <T w={27}>11:15</T>
        <T w={59}>07/08/2017</T>
      </div>
    </div>
  );
}

export default function App() {
  return (
    <div className="flex h-[1080px] w-[1920px] flex-col overflow-hidden bg-[#f1f1f1] font-['Liberation_Sans',Arial,sans-serif]">
      <TabStrip />
      <AddressBar />
      <TopBar />
      <Canvas />
      <Taskbar />
    </div>
  );
}
